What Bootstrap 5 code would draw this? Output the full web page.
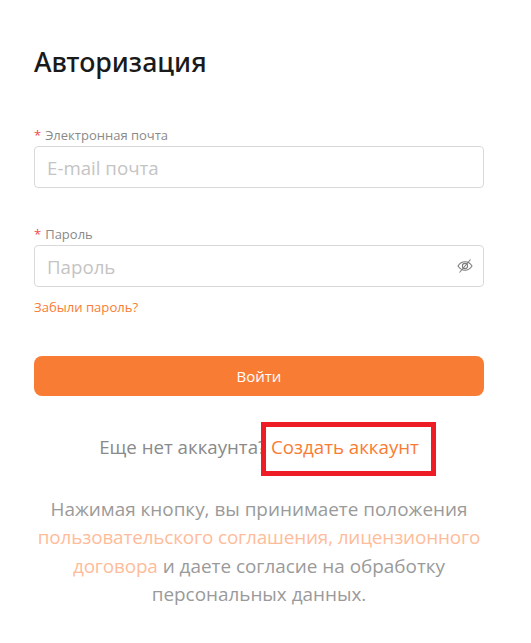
<!doctype html>
<html lang="ru">
<head>
<meta charset="utf-8">
<title>Авторизация</title>
<link href="https://cdn.jsdelivr.net/npm/bootstrap@5.3.0/dist/css/bootstrap.min.css" rel="stylesheet">
<style>
body{font-family:"Open Sans","Noto Sans",sans-serif;background:#fff;color:#1a1a1a;margin:0}
.auth-wrap{width:450px;margin-left:34px;padding-top:43px}
.auth-title{font-family:"Noto Sans",sans-serif;font-size:26.8px;font-weight:500;line-height:38px;margin:0 0 45px;color:#1a1a1a}
.auth-label{display:block;font-size:13px;line-height:18px;color:#8a8a8a;margin:0 0 2px}
.auth-label i{font-style:normal;color:#f5474f;margin-right:4px}
.auth-input{height:42px;border:1px solid #d9d9d9;border-radius:4px;font-size:18.7px;padding:0 12px;color:#333}
.auth-input::placeholder{color:#c4c4c4;opacity:1}
.auth-group{margin-bottom:37px}
.auth-group-last{margin-bottom:0}
.auth-eye{position:absolute;right:11px;top:13px;width:16px;height:16px}
.auth-forgot{display:block;font-size:13.1px;line-height:18px;color:#f97c34;text-decoration:none;margin-top:11px}
.auth-submit{display:block;width:100%;height:40px;background:#f97c34;border:0;border-radius:8px;color:#fff;font-size:15px;margin-top:40px}
.auth-submit:hover{background:#f97c34;color:#fff}
.auth-signup{position:relative;width:450px;text-align:center;font-size:18.7px;line-height:26px;color:#8a8a8a;margin-top:38px}
.auth-signup a{color:#f97c34;text-decoration:none}
.auth-mark{position:absolute;left:227px;top:-12px;width:175px;height:54px;border:5px solid #ee1c25}
.auth-legal{text-align:center;font-size:18.9px;line-height:28.3px;color:#9a9a9a;margin-top:35px}
.auth-legal a{color:#ffbc9a;text-decoration:none;letter-spacing:-.15px}
</style>
</head>
<body>
<main class="auth-wrap">
  <h1 class="auth-title">Авторизация</h1>
  <form>
    <div class="auth-group">
      <label class="auth-label" for="em"><i>*</i>Электронная почта</label>
      <input id="em" class="form-control auth-input" type="text" placeholder="E-mail почта">
    </div>
    <div class="auth-group-last">
      <label class="auth-label" for="pw"><i>*</i>Пароль</label>
      <div class="position-relative">
        <input id="pw" class="form-control auth-input" type="password" placeholder="Пароль">
        <svg class="auth-eye" viewBox="0 0 16 16" fill="none" stroke="#7d7d7d" stroke-width="1.1">
          <path d="M1 8c1.800-2.800 4.200-4.200 7-4.200S13.200 5.200 15 8c-1.800 2.800-4.200 4.200-7 4.200S2.800 10.800 1 8z"/>
          <circle cx="8" cy="8" r="2.600"/>
          <path d="M13.500 1.500 2.500 14.500"/>
        </svg>
      </div>
      <a class="auth-forgot" href="#">Забыли пароль?</a>
    </div>
    <button class="btn auth-submit" type="button">Войти</button>
  </form>
  <div class="auth-signup">Еще нет аккаунта? <a href="#">Создать аккаунт</a><div class="auth-mark"></div></div>
  <p class="auth-legal">Нажимая кнопку, вы принимаете положения <a href="#">пользовательского соглашения, лицензионного договора</a> и даете согласие на обработку персональных данных.</p>
</main>
<script src="https://cdn.jsdelivr.net/npm/bootstrap@5.3.0/dist/js/bootstrap.bundle.min.js"></script>
</body>
</html>
